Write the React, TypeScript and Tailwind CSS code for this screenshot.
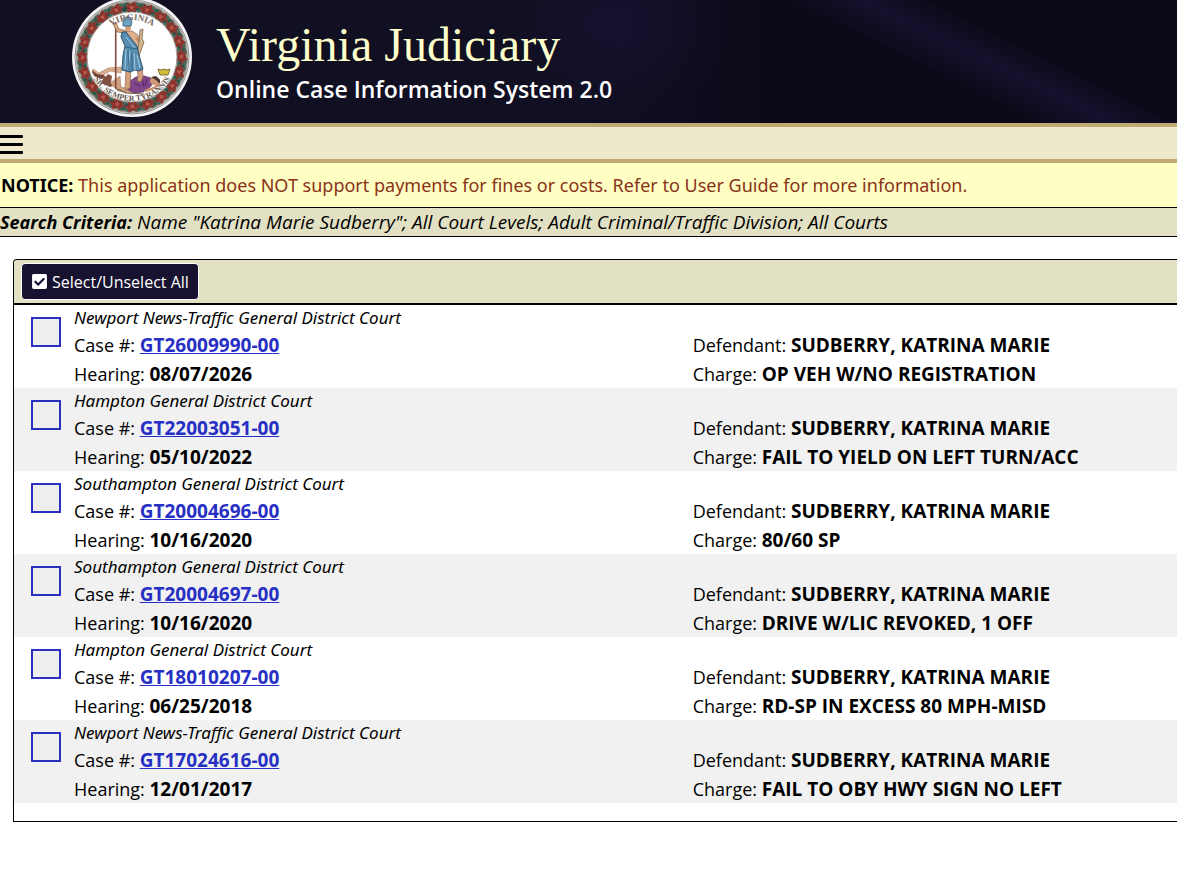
import { useState } from "react";
import { FaCheckSquare } from "react-icons/fa";

type CourtCase = {
  id: string;
  court: string;
  hearing: string;
  defendant: string;
  charge: string;
};

const cases: CourtCase[] = [
  { id: "GT26009990-00", court: "Newport News-Traffic General District Court", hearing: "08/07/2026", defendant: "SUDBERRY, KATRINA MARIE", charge: "OP VEH W/NO REGISTRATION" },
  { id: "GT22003051-00", court: "Hampton General District Court", hearing: "05/10/2022", defendant: "SUDBERRY, KATRINA MARIE", charge: "FAIL TO YIELD ON LEFT TURN/ACC" },
  { id: "GT20004696-00", court: "Southampton General District Court", hearing: "10/16/2020", defendant: "SUDBERRY, KATRINA MARIE", charge: "80/60 SP" },
  { id: "GT20004697-00", court: "Southampton General District Court", hearing: "10/16/2020", defendant: "SUDBERRY, KATRINA MARIE", charge: "DRIVE W/LIC REVOKED, 1 OFF" },
  { id: "GT18010207-00", court: "Hampton General District Court", hearing: "06/25/2018", defendant: "SUDBERRY, KATRINA MARIE", charge: "RD-SP IN EXCESS 80 MPH-MISD" },
  { id: "GT17024616-00", court: "Newport News-Traffic General District Court", hearing: "12/01/2017", defendant: "SUDBERRY, KATRINA MARIE", charge: "FAIL TO OBY HWY SIGN NO LEFT" },
];

const wreath = Array.from({ length: 20 }, (_, i) => i * 18);

function Seal() {
  return (
    <svg viewBox="0 3 120 117" className="h-[117px] w-[120px] shrink-0" role="img" aria-label="Seal of Virginia">
      <circle cx="60" cy="60" r="60" fill="#f4f4f4" />
      <circle cx="60" cy="60" r="57" fill="none" stroke="#8d8f94" strokeWidth="1" />
      <circle cx="60" cy="60" r="50.5" fill="none" stroke="#a39c92" strokeWidth="11" />

      {/* Wreath */}
      {wreath.map((deg) => (
        <g key={deg} transform={`rotate(${deg} 60 60)`}>
          <path d="M50 7l5 -2l5 2l5 -2l5 3l-3 3l2 4l-6 -1l-4 2l-3 -2l-5 1l1 -4z" fill="#46685a" />
          <path d="M64 12l4 -3l3 3l-4 3zM51 8l3 -1l-1 3z" fill="#1f4a3e" />
          <path d="M55 6l4 1l4 -3l1 4l4 2l-4 2l0 4l-4 -2l-4 3l-1 -4l-4 -2l4 -2z" fill="#8f352f" />
          <path d="M59 8l3 2l-2 3l-3 -2z" fill="#b7574b" />
          <path d="M60 6l0 3M56 12l2 -1M64 12l-2 -1" stroke="#5f2421" strokeWidth="0.7" />
        </g>
      ))}
      <circle cx="60" cy="60" r="45" fill="#fff" stroke="#8f8a86" strokeWidth="0.8" />

      {/* Fallen figure */}
      <path d="M49 76L38 74L28 80L20 76L21 72L27 76L36 71L50 70z" fill="#d9ae8c" stroke="#96705a" strokeWidth="0.5" />
      <path d="M20 73l5 4l7 1l2 3l-5 1l-7 -3z" fill="#75463a" />
      <path d="M31 82l5 -5l4 2l-1 6l2 4l-3 1l-9 -4z" fill="#81503f" />
      <path d="M48 79L38 86L46 94L60 96L58 92L49 90z" fill="#cf9f7d" stroke="#96705a" strokeWidth="0.5" />
      <path d="M58 84l6 -4l8 -1l7 2l3 4l-4 5l-7 5l-9 1l-7 -4z" fill="#80458a" stroke="#4e2859" strokeWidth="0.7" />
      <path d="M62 86l6 3m2 -8l2 9m3 -8l-2 7" stroke="#552765" fill="none" />
      <path d="M73 94l9 -3l5 -4" stroke="#c8906c" strokeWidth="2.5" fill="none" />
      <ellipse cx="83" cy="84" rx="5" ry="4" fill="#cf9a78" />
      <path d="M79 80l5 -1l4 4l0 4l-4 -4z" fill="#47322c" />
      <path d="M45 92l9 4l18 1" stroke="#6f5546" strokeWidth="1.2" fill="none" />

      {/* Virtus */}
      <path d="M43.700 25V92" stroke="#85463d" strokeWidth="1.6" />
      <path d="M53 36L45 35L41 27L44 26L47 32L56 34z" fill="#d7a57f" stroke="#76523e" strokeWidth="0.6" />
      <path d="M52 35l8 -1l6 4l3 6l-3 7l-9 -3z" fill="#ddb18e" stroke="#7b5642" strokeWidth="0.6" />
      <path d="M64 41l6 5l-3 8l-4 3" stroke="#c28f6b" strokeWidth="3" fill="none" />
      <path d="M68 33l3 -1l-1 10l2 3l-5 14l-2 -1l2 -13z" fill="#d4b692" stroke="#6e5540" strokeWidth="0.7" />
      <path d="M54 71l5 0l-1 20l-4 2l-1 -2z" fill="#d3a27c" stroke="#80543e" strokeWidth="0.6" />
      <path d="M65 70l5 0l1 10l-2 5l-4 -1l1 -5z" fill="#d3a27c" stroke="#80543e" strokeWidth="0.6" />
      <path d="M50 35l4 0l11 14l2 9l4 14l-4 2l-4 -1l-5 2l-8 -2l1 -15l2 -9l-4 -9z" fill="#568eb2" stroke="#244a66" strokeWidth="0.9" />
      <path d="M54 40l9 11M54 52l-1 20M58 54l-2 19M62 56l1 17M65 58l3 13" stroke="#a8cbe0" strokeWidth="1" fill="none" />
      <path d="M53 50l12 2M56 54l1 19M60 55v18" stroke="#285876" strokeWidth="0.8" fill="none" />
      <ellipse cx="56" cy="31" rx="3" ry="3.600" fill="#d5a07c" />
      <path d="M51 29l0 -5l3 -4l4 0l2 5l-1 4z" fill="#6fa3c5" stroke="#305b7b" strokeWidth="0.8" />

      {/* Crown */}
      <path d="M86 72l3 1l3 -1l3 1l3 -1l-2 6h-8z" fill="#d5bd3a" stroke="#695b25" strokeWidth="0.8" />

      <path id="motto-top" d="M23 60A37 37 0 0 1 97 60" fill="none" />
      <path id="motto-bottom" d="M16 60A44 44 0 0 0 104 60" fill="none" />
      <text className="font-['Liberation_Serif',serif] text-[9px] font-bold" fill="#75675c" textAnchor="middle">
        <textPath href="#motto-top" startOffset="50%">VIRGINIA</textPath>
      </text>
      <text className="font-['Liberation_Serif',serif] text-[8px] font-bold" fill="#66564d" textAnchor="middle">
        <textPath href="#motto-bottom" startOffset="50%">SIC SEMPER TYRANNIS</textPath>
      </text>
    </svg>
  );
}

function CaseRow({ item, checked, onToggle }: { item: CourtCase; checked: boolean; onToggle: () => void }) {
  return (
    <li className="flex gap-[13px] pl-[17px] text-[18px] odd:bg-white even:bg-[#f1f1f1]">
      <input
        type="checkbox"
        aria-label={`Select case ${item.id}`}
        checked={checked}
        onChange={onToggle}
        className="mt-3 size-[30px] shrink-0 appearance-none border-2 border-[#2b2fc0] bg-[#eeeeee] checked:bg-[#2b2fc0]"
      />
      <div className="grid grow grid-cols-[56%_44%]">
        <p className="col-span-2 font-['Noto_Sans',sans-serif] text-[17px] leading-[26px] italic">{item.court}</p>
        <p className="leading-[29px]">
          Case #: <a href={`#${item.id}`} className="text-[19px] font-bold text-[#2730c4] underline">{item.id}</a>
        </p>
        <p className="pl-px leading-[29px]">
          Defendant: <b className="text-[19px]">{item.defendant}</b>
        </p>
        <p className="leading-7">
          Hearing: <b className="text-[19px]">{item.hearing}</b>
        </p>
        <p className="pl-px leading-7">
          Charge: <b className="text-[19px]">{item.charge}</b>
        </p>
      </div>
    </li>
  );
}

export default function App() {
  const [selected, setSelected] = useState<string[]>([]);

  const toggle = (id: string) =>
    setSelected((prev) => (prev.includes(id) ? prev.filter((x) => x !== id) : [...prev, id]));

  const toggleAll = () => setSelected(selected.length === cases.length ? [] : cases.map((c) => c.id));

  return (
    <div className="min-h-screen overflow-x-hidden bg-white font-['Open_Sans','Noto_Sans',sans-serif] text-black">
      <header className="flex h-[123px] gap-6 bg-[#100e20] bg-[radial-gradient(ellipse_110px_90px_at_53%_20%,#18143a90,transparent),linear-gradient(26deg,transparent_72%,#171434c0_78%,transparent_83%),linear-gradient(90deg,#110f22_50%,#0b0917_68%)] pl-[72px]">
        <Seal />
        <div className="pt-[18px]">
          <h1 className="font-['Liberation_Serif',serif] text-[48px] leading-[54px] text-[#ffffcc]">Virginia Judiciary</h1>
          <p className="text-[23px] leading-[34px] font-semibold text-white">Online Case Information System 2.0</p>
        </div>
      </header>

      <nav className="flex h-10 items-end border-y-4 border-[#c0aa74] bg-[#efe9cb] pb-1">
        <button type="button" aria-label="Menu">
          <svg viewBox="0 0 23 20" className="h-5 w-[23px]">
            <path d="M0 0h22q1 0 1 1v1q0 1 -1 1H0zM0 8h22q1 0 1 1v1q0 1 -1 1H0zM0 16h22q1 0 1 1v1q0 1 -1 1H0z" />
          </svg>
        </button>
      </nav>

      <p className="bg-[#ffffc4] pl-px font-['Noto_Sans',sans-serif] text-[18px] leading-[44px] text-[#8a3219]">
        <b className="text-black">NOTICE:</b> This application does NOT support payments for fines or costs. Refer to User Guide for more information.
      </p>

      <p className="border-y border-black bg-[#e3e1c4] text-[19px] leading-7 italic">
        <b className="text-[18px]">Search Criteria:</b> Name "Katrina Marie Sudberry"; All Court Levels; Adult Criminal/Traffic Division; All Courts
      </p>

      <main className="mt-[22px] ml-[13px] rounded-tl border-y border-l border-black pb-[18px]">
        <div className="rounded-tl border-b-2 border-black bg-[#e3e1c4] px-[7px] py-[3px]">
          <button
            type="button"
            onClick={toggleAll}
            className="flex h-[37px] items-center gap-1 rounded-sm border border-white bg-[#17122f] px-[9px] text-[16px] text-white"
          >
            <FaCheckSquare className="size-[17px]" />
            Select/Unselect All
          </button>
        </div>
        <ul>
          {cases.map((c) => (
            <CaseRow key={c.id} item={c} checked={selected.includes(c.id)} onToggle={() => toggle(c.id)} />
          ))}
        </ul>
      </main>
    </div>
  );
}
